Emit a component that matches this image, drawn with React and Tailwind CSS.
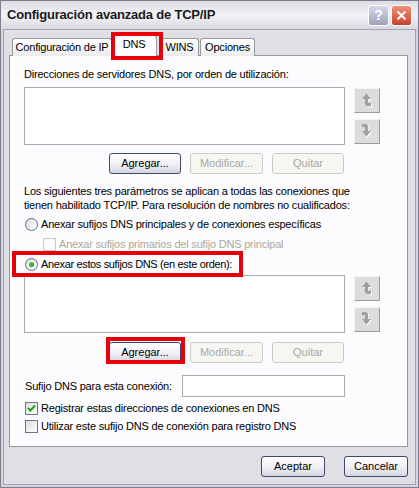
import React from 'react';

const ArrowUp = () => (
  <svg width="13" height="15" viewBox="0 0 13 15">
    <g transform="translate(1,1)" fill="#ffffff" stroke="#ffffff">
      <polygon points="5.5,0.5 1,6 10,6" stroke="none" />
      <path d="M5.5 5 V9.5 Q5.5 11.5 7.5 11.5 H10" fill="none" strokeWidth="3.4" />
    </g>
    <g fill="#a0a0a0" stroke="#a0a0a0">
      <polygon points="5.5,0.5 1,6 10,6" stroke="none" />
      <path d="M5.5 5 V9.5 Q5.5 11.5 7.5 11.5 H10" fill="none" strokeWidth="3.4" />
    </g>
  </svg>
);

const ArrowDown = () => (
  <svg width="13" height="15" viewBox="0 0 13 15">
    <g transform="translate(1,1)" fill="#ffffff" stroke="#ffffff">
      <path d="M1 1.5 H3.5 Q5.5 1.5 5.5 3.5 V8" fill="none" strokeWidth="3.4" />
      <polygon points="1,7 10,7 5.5,12.5" stroke="none" />
    </g>
    <g fill="#a0a0a0" stroke="#a0a0a0">
      <path d="M1 1.5 H3.5 Q5.5 1.5 5.5 3.5 V8" fill="none" strokeWidth="3.4" />
      <polygon points="1,7 10,7 5.5,12.5" stroke="none" />
    </g>
  </svg>
);

const ArrowButton = ({ children }) => (
  <div className="w-[26px] h-[25px] flex items-center justify-center bg-[#dcdcdc] border border-t-[#f4f4f4] border-l-[#f4f4f4] border-b-[#9c9c9c] border-r-[#9c9c9c]">
    {children}
  </div>
);

const XpButton = ({ label, disabled, className = '' }) => (
  <div
    className={`h-[21px] flex items-center justify-center rounded-[3px] border text-[11px] ${
      disabled
        ? 'border-[#cbcbc6] bg-[#f6f6f3] text-[#aca899]'
        : 'border-[#3d4a6b] bg-gradient-to-b from-[#ffffff] via-[#f2f2f6] to-[#d4d4e0] text-black'
    } ${className}`}
  >
    {label}
  </div>
);

const ListBox = () => (
  <div className="w-[321px] h-[58px] bg-white border border-[#a5acb2]" />
);

const Radio = ({ checked }) => (
  <div className="w-[13px] h-[13px] rounded-full border border-[#5b6b83] bg-gradient-to-br from-[#dcdcdc] to-[#ffffff] flex items-center justify-center">
    {checked && <div className="w-[5px] h-[5px] rounded-full bg-gradient-to-br from-[#55d155] to-[#1b921b]" />}
  </div>
);

const Check = ({ checked, disabled }) => (
  <div
    className={`w-[13px] h-[13px] border flex items-center justify-center ${
      disabled ? 'border-[#c8c8c4] bg-transparent' : 'border-[#66778f] bg-gradient-to-br from-[#dcdcdc] to-[#ffffff]'
    }`}
  >
    {checked && (
      <svg width="9" height="9" viewBox="0 0 9 9">
        <path d="M1 4 L3.5 6.5 L8 1.5" fill="none" stroke="#21a121" strokeWidth="2" />
      </svg>
    )}
  </div>
);

const Tab = ({ label, selected, className = '' }) => (
  <div
    className={`flex items-center justify-center border border-b-0 border-[#919b9c] rounded-t-[3px] text-[11px] tracking-[-0.2px] ${
      selected
        ? 'relative z-10 h-[21px] bg-[#fcfcfe] pb-[3px]'
        : 'h-[18px] bg-gradient-to-b from-[#ffffff] to-[#ececec]'
    } ${className}`}
  >
    {label}
  </div>
);

const ButtonRow = () => (
  <div className="w-[321px] flex justify-end gap-[9px] pr-[1px]">
    <XpButton label="Agregar..." className="w-[72px]" />
    <XpButton label="Modificar..." disabled className="w-[73px]" />
    <XpButton label="Quitar" disabled className="w-[72px]" />
  </div>
);

export default function App() {
  return (
    <div className="relative w-[419px] h-[488px] border border-[#7d7d8c] bg-[#d4d4dc] flex flex-col font-['Liberation_Sans',Arial,sans-serif] text-black select-none">
      {/* Title bar */}
      <div className="h-[28px] flex items-center pl-[6px] pr-[6px] bg-gradient-to-b from-[#dcdce4] via-[#f2f2f6] to-[#d8d8e0]">
        <span className="text-[13px] font-bold tracking-[-0.2px] text-[#1a1a1a]">Configuración avanzada de TCP/IP</span>
        <div className="ml-auto flex gap-[2px]">
          <div className="w-[21px] h-[21px] rounded-[3px] border border-white bg-gradient-to-b from-[#d6d8e6] to-[#9ea3bd] flex items-center justify-center text-white text-[14px] font-bold">
            ?
          </div>
          <div className="w-[21px] h-[21px] rounded-[3px] border border-white bg-gradient-to-b from-[#f0907a] to-[#c8402a] flex items-center justify-center">
            <svg width="11" height="11" viewBox="0 0 11 11">
              <path d="M1.5 1.5 L9.5 9.5 M9.5 1.5 L1.5 9.5" stroke="#ffffff" strokeWidth="2" />
            </svg>
          </div>
        </div>
      </div>

      {/* Body */}
      <div className="flex-1 mx-[2px] mb-[2px] border border-[#a2a2b2] bg-[#e0dfe3] pl-[5px] pt-[5px]">
        {/* Tabs */}
        <div className="flex items-end h-[21px] pl-[3px]">
          <Tab label="Configuración de IP" className="w-[100px]" />
          <Tab label="DNS" selected className="w-[46px] -ml-[1px]" />
          <Tab label="WINS" className="w-[39px] ml-[3px]" />
          <Tab label="Opciones" className="w-[55px] ml-[1px]" />
        </div>

        {/* Panel */}
        <div className="-mt-[1px] w-[399px] h-[392px] border border-[#919b9c] bg-[#fcfcfe] pl-[14px] pt-[12px] text-[11px] leading-[13px] tracking-[-0.2px]">
          <div>Direcciones de servidores DNS, por orden de utilización:</div>
          <div className="flex mt-[6px]">
            <ListBox />
            <div className="ml-[9px] pt-[1px] flex flex-col gap-[6px]">
              <ArrowButton><ArrowUp /></ArrowButton>
              <ArrowButton><ArrowDown /></ArrowButton>
            </div>
          </div>
          <div className="mt-[8px] tracking-normal">
            <ButtonRow />
          </div>

          <div className="mt-[10px] leading-[14px]">
            <div>Los siguientes tres parámetros se aplican a todas las conexiones que</div>
            <div>tienen habilitado TCP/IP. Para resolución de nombres no cualificados:</div>
          </div>

          <div className="mt-[2px]">
            <div className="h-[20px] flex items-center gap-[3px] pl-[1px]">
              <Radio />
              <span>Anexar sufijos DNS principales y de conexiones específicas</span>
            </div>
            <div className="h-[20px] flex items-center gap-[3px] pl-[19px] text-[#aca899]">
              <Check disabled />
              <span>Anexar sufijos primarios del sufijo DNS principal</span>
            </div>
            <div className="h-[20px] flex items-center gap-[3px] pl-[1px]">
              <Radio checked />
              <span className="tracking-[-0.35px]">Anexar estos sufijos DNS (en este orden):</span>
            </div>
          </div>

          <div className="flex mt-[1px]">
            <ListBox />
            <div className="ml-[9px] pt-[1px] flex flex-col gap-[6px]">
              <ArrowButton><ArrowUp /></ArrowButton>
              <ArrowButton><ArrowDown /></ArrowButton>
            </div>
          </div>
          <div className="mt-[9px] tracking-normal">
            <ButtonRow />
          </div>

          <div className="mt-[12px] flex items-center w-[321px]">
            <span className="pl-[1px]">Sufijo DNS para esta conexión:</span>
            <div className="ml-auto w-[163px] h-[22px] bg-white border border-[#a5acb2]" />
          </div>

          <div className="mt-[2px]">
            <div className="h-[18px] flex items-center gap-[3px] pl-[1px]">
              <Check checked />
              <span>Registrar estas direcciones de conexiones en DNS</span>
            </div>
            <div className="h-[18px] flex items-center gap-[3px] pl-[1px]">
              <Check />
              <span>Utilizar este sufijo DNS de conexión para registro DNS</span>
            </div>
          </div>
        </div>

        {/* Dialog buttons */}
        <div className="w-[399px] flex justify-end gap-[19px] mt-[9px] text-[11px]">
          <XpButton label="Aceptar" className="w-[64px]" />
          <XpButton label="Cancelar" className="w-[64px]" />
        </div>
      </div>

      {/* Red highlight marks */}
      <div className="absolute left-[110px] top-[31px] w-[52px] h-[28px] border-[4px] border-[#e8000b] z-20 pointer-events-none" />
      <div className="absolute left-[11px] top-[250px] w-[231px] h-[26px] border-[4px] border-[#e8000b] z-20 pointer-events-none" />
      <div className="absolute left-[105px] top-[336px] w-[79px] h-[27px] border-[4px] border-[#e8000b] z-20 pointer-events-none" />
    </div>
  );
}
